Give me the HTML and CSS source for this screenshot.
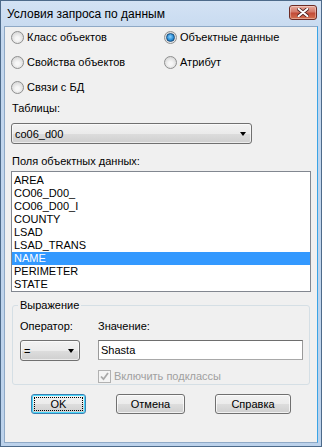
FILE: index.html
```html
<!DOCTYPE html>
<html lang="ru">
<head>
    <meta charset="UTF-8">
    <title>Условия запроса по данным</title>
    <link rel="stylesheet" href="styles.css">
</head>
<body>
    <div class="window">
        <!-- Title bar -->
        <div class="titlebar">
            <span class="title">Условия запроса по данным</span>
            <span class="close-btn">
                <svg width="12" height="9" viewBox="0 0 12 9">
                    <path d="M1.5 0.8 L10.5 8.2 M10.5 0.8 L1.5 8.2" stroke="#4a2020" stroke-width="3.6" stroke-linecap="round"/>
                    <path d="M1.5 0.8 L10.5 8.2 M10.5 0.8 L1.5 8.2" stroke="#ffffff" stroke-width="2" stroke-linecap="round"/>
                </svg>
            </span>
        </div>

        <!-- Dialog body -->
        <div class="client">
            <div class="source-grid">
                <div class="radio"><span class="radio-dot"></span>Класс объектов</div>
                <div class="radio checked"><span class="radio-dot"></span>Объектные данные</div>
                <div class="radio"><span class="radio-dot"></span>Свойства объектов</div>
                <div class="radio"><span class="radio-dot"></span>Атрибут</div>
                <div class="radio"><span class="radio-dot"></span>Связи с БД</div>
            </div>

            <div class="field-label tables-label">Таблицы:</div>
            <div class="combo table-combo">
                <span class="combo-text">co06_d00</span>
                <span class="combo-arrow"></span>
            </div>

            <div class="field-label fields-label">Поля объектных данных:</div>
            <ul class="listbox">
                <li>AREA</li>
                <li>CO06_D00_</li>
                <li>CO06_D00_I</li>
                <li>COUNTY</li>
                <li>LSAD</li>
                <li>LSAD_TRANS</li>
                <li class="selected">NAME</li>
                <li>PERIMETER</li>
                <li>STATE</li>
            </ul>

            <fieldset class="group">
                <legend>Выражение</legend>
                <div class="expr-grid">
                    <div class="field-label">Оператор:</div>
                    <div class="field-label">Значение:</div>
                    <div class="combo op-combo">
                        <span class="combo-text">=</span>
                        <span class="combo-arrow"></span>
                    </div>
                    <div class="textbox">Shasta</div>
                    <div></div>
                    <div class="checkbox disabled">
                        <span class="check-box">
                            <svg width="9" height="9" viewBox="0 0 9 9">
                                <path d="M1 4.5 L3.5 7.2 L8 1" fill="none" stroke="#a8a8a8" stroke-width="1.8"/>
                            </svg>
                        </span>
                        Включить подклассы
                    </div>
                </div>
            </fieldset>

            <div class="buttons">
                <div class="button default ok-btn"><span class="focus">OK</span></div>
                <div class="button cancel-btn">Отмена</div>
                <div class="button help-btn">Справка</div>
            </div>
        </div>
    </div>
</body>
</html>
```

FILE: styles.css
```css
* {
    margin: 0;
    padding: 0;
    box-sizing: border-box;
}

body {
    font-family: "Liberation Sans", Arial, sans-serif;
    font-size: 11px;
    color: #000000;
    background-color: #ffffff;
}

/* Window frame */
.window {
    width: 322px;
    height: 447px;
    display: flex;
    flex-direction: column;
    border: 1px solid #4d6a8a;
    background: linear-gradient(#d3e2f4, #c3d7ee 40px, #bcd2eb);
}

.titlebar {
    height: 25px;
    display: flex;
    justify-content: space-between;
    align-items: flex-start;
    padding: 0 4px 0 6px;
}

.title {
    font-size: 12px;
    line-height: 14px;
    margin-top: 6px;
}

.close-btn {
    width: 28px;
    height: 15px;
    margin-top: 4px;
    display: flex;
    align-items: center;
    justify-content: center;
    border: 1px solid #6d2b24;
    border-radius: 3px;
    background: linear-gradient(#e9a99b, #d47a6a 45%, #c24b38 55%, #d5704f);
    box-shadow: inset 0 0 0 1px rgba(255, 255, 255, 0.35);
}

/* Client area */
.client {
    flex: 1;
    margin: 0 3px 3px 3px;
    border: 1px solid #8fa9c6;
    border-right-color: #3aa4e6;
    background-color: #f0f0f0;
    padding: 0 6px;
    display: flex;
    flex-direction: column;
}

/* Radio buttons */
.source-grid {
    display: grid;
    grid-template-columns: 153px 1fr;
    grid-auto-rows: 16px;
    row-gap: 9px;
    padding-top: 2px;
}

.radio {
    display: flex;
    align-items: center;
    gap: 3px;
    line-height: 13px;
    white-space: nowrap;
}

.radio-dot {
    width: 13px;
    height: 13px;
    border-radius: 50%;
    border: 1px solid #8e8f8f;
    background: radial-gradient(circle at 50% 60%, #f7f7f7 20%, #d9d9d9 75%, #c8c8c8);
    display: flex;
    align-items: center;
    justify-content: center;
    flex-shrink: 0;
}

.radio.checked .radio-dot::after {
    content: '';
    width: 7px;
    height: 7px;
    border-radius: 50%;
    border: 1px solid #174c7c;
    background: radial-gradient(circle at 45% 40%, #8fd2ff, #2b8fd7 55%, #0f5c9e);
}

/* Labels */
.field-label {
    line-height: 13px;
    padding-left: 1px;
    white-space: nowrap;
}

.tables-label {
    margin-top: 7px;
}

.fields-label {
    margin-top: 11px;
}

/* Combo boxes */
.combo {
    height: 21px;
    display: flex;
    align-items: center;
    justify-content: space-between;
    border: 1px solid #707070;
    border-radius: 3px;
    background: linear-gradient(#f2f2f2, #ebebeb 50%, #dddddd 51%, #cfcfcf);
    box-shadow: inset 0 0 0 1px rgba(255, 255, 255, 0.6);
    padding: 0 5px 0 3px;
}

.table-combo {
    width: 241px;
    margin-top: 8px;
}

.combo-arrow {
    width: 0;
    height: 0;
    border-left: 3.5px solid transparent;
    border-right: 3.5px solid transparent;
    border-top: 4px solid #000000;
    margin-top: 1px;
}

/* List box */
.listbox {
    list-style: none;
    margin-top: 3px;
    height: 121px;
    border: 1px solid #828790;
    background-color: #ffffff;
    padding: 2px 0 0 0;
    overflow: hidden;
}

.listbox li {
    height: 13px;
    line-height: 13px;
    padding-left: 2px;
}

.listbox li.selected {
    background-color: #3399ff;
    color: #ffffff;
}

/* Expression group */
.group {
    margin: 7px 1px 0 1px;
    border: 1px solid #d5dfe5;
    border-radius: 3px;
    padding: 8px 7px 3px 7px;
    min-inline-size: 0;
}

.group legend {
    padding: 0 2px;
    margin-left: -2px;
    line-height: 13px;
}

.expr-grid {
    display: grid;
    grid-template-columns: 60px 205px;
    column-gap: 18px;
    grid-template-rows: 13px 21px 13px;
    row-gap: 7px;
}

.expr-grid .field-label {
    padding-left: 0;
}

.op-combo {
    width: 60px;
}

.textbox {
    height: 20px;
    border: 1px solid #7a7a7a;
    border-color: #6e6e6e #9a9a9a #a8a8a8 #9a9a9a;
    background-color: #ffffff;
    line-height: 18px;
    padding-left: 2px;
}

.checkbox {
    margin-top: 3px;
    display: flex;
    align-items: center;
    gap: 3px;
    line-height: 13px;
    white-space: nowrap;
}

.checkbox.disabled {
    color: #a0a0a0;
}

.check-box {
    width: 13px;
    height: 13px;
    border: 1px solid #b1b1b1;
    background-color: #f4f4f4;
    display: flex;
    align-items: center;
    justify-content: center;
    flex-shrink: 0;
}

/* Buttons */
.buttons {
    display: flex;
    gap: 30px;
    margin-top: 9px;
    padding-left: 20px;
}

.button {
    height: 20px;
    display: flex;
    align-items: center;
    justify-content: center;
    border: 1px solid #707070;
    border-radius: 3px;
    background: linear-gradient(#f2f2f2, #ebebeb 50%, #dddddd 51%, #cfcfcf);
    box-shadow: inset 0 0 0 1px rgba(255, 255, 255, 0.7);
    line-height: 13px;
}

.button.default {
    border-color: #3c7fb1;
    box-shadow: inset 0 0 0 1px #48d8fb;
    padding: 2px;
}

.button .focus {
    flex: 1;
    align-self: stretch;
    display: flex;
    align-items: center;
    justify-content: center;
    border: 1px dotted #000000;
}

.ok-btn {
    width: 55px;
}

.cancel-btn {
    width: 69px;
}

.help-btn {
    width: 76px;
}
```
